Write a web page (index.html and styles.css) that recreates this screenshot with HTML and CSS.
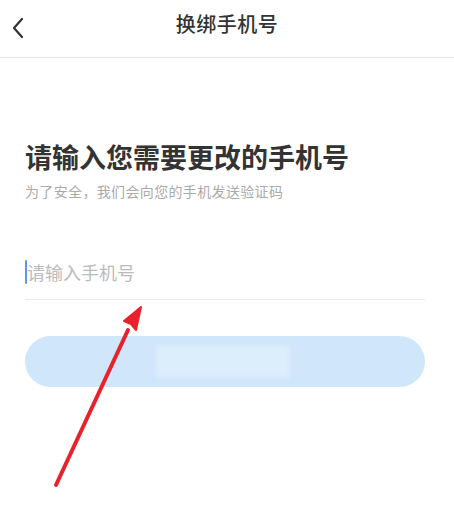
FILE: index.html
```html
<!DOCTYPE html>
<html lang="zh">
<head>
<meta charset="utf-8">
<title>换绑手机号</title>
<link rel="stylesheet" href="styles.css">
</head>
<body>
<div class="page">
  <header class="nav">
    <span class="back">
      <svg width="14" height="22" viewBox="0 0 14 22"><path d="M11 2 L3 11 L11 20" fill="none" stroke="#333" stroke-width="2.2" stroke-linecap="round" stroke-linejoin="round"/></svg>
    </span>
    <h1 class="nav-title">换绑手机号</h1>
  </header>
  <main class="content">
    <h2 class="heading">请输入您需要更改的手机号</h2>
    <p class="sub">为了安全，我们会向您的手机发送验证码</p>
    <div class="field">
      <span class="caret"></span>
      <span class="placeholder">请输入手机号</span>
    </div>
    <div class="btn"><span class="btn-blur"></span></div>
  </main>
  <svg class="arrow" width="454" height="517" viewBox="0 0 454 517">
    <path d="M56 485 L128 330" stroke="#e8212b" stroke-width="4" stroke-linecap="round" fill="none"/>
    <path d="M141 307 L124 321 L131 324 L136 330 Z" fill="#e8212b" stroke="#e8212b" stroke-width="2" stroke-linejoin="round"/>
  </svg>
</div>
</body>
</html>
```
FILE: styles.css
```css
* { box-sizing: border-box; }
html, body { margin: 0; padding: 0; background: #fff; }
body {
  font-family: "Noto Sans CJK SC", "Noto Sans", sans-serif;
  color: #333;
}
.page { position: relative; width: 454px; height: 517px; overflow: hidden; }
.nav {
  height: 58px;
  border-bottom: 1px solid #e6e6e6;
  display: flex;
  align-items: center;
  justify-content: center;
  position: relative;
}
.back {
  position: absolute;
  left: 11px;
  top: 17px;
  display: flex;
}
.nav-title {
  margin: 0;
  font-size: 20px;
  font-weight: 500;
  color: #333;
  letter-spacing: 0.5px;
  line-height: 1;
  transform: translateY(-5px);
}
.content { padding: 80px 29px 0 25px; }
.heading {
  margin: 0;
  font-size: 27px;
  font-weight: 700;
  color: #333;
  line-height: 38px;
}
.sub {
  margin: 5px 0 0 0;
  font-size: 14px;
  letter-spacing: 0.35px;
  color: #aaa;
  line-height: 20px;
}
.field {
  margin-top: 56px;
  height: 43px;
  border-bottom: 1.5px solid #ebebeb;
  display: flex;
  align-items: flex-start;
  padding-top: 3px;
}
.caret {
  width: 2px;
  height: 24px;
  background: #5a9be0;
  border-radius: 1px;
  margin-top: 0;
}
.placeholder {
  font-size: 18px;
  line-height: 24px;
  color: #bbb;
}
.btn {
  margin-top: 36px;
  height: 51px;
  border-radius: 26px;
  background: #cfe6fb;
  display: flex;
  justify-content: center;
  align-items: center;
}
.btn-blur {
  width: 134px;
  height: 33px;
  background: #dcedfc;
  filter: blur(2px);
  transform: translateX(-2px);
}
.arrow { position: absolute; left: 0; top: 0; pointer-events: none; }
```
